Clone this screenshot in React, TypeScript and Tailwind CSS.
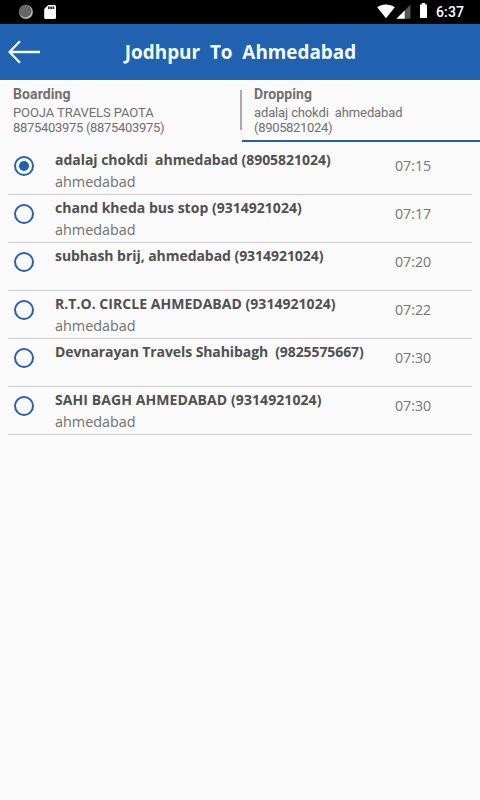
interface Stop {
  name: string;
  city: string;
  time: string;
  tracking: string;
}

const stops: Stop[] = [
  { name: 'adalaj chokdi  ahmedabad (8905821024)', city: 'ahmedabad', time: '07:15', tracking: 'tracking-[-0.035px]' },
  { name: 'chand kheda bus stop (9314921024)', city: 'ahmedabad', time: '07:17', tracking: 'tracking-[0.02px]' },
  { name: 'subhash brij, ahmedabad (9314921024)', city: '', time: '07:20', tracking: 'tracking-[-0.05px]' },
  { name: 'R.T.O. CIRCLE AHMEDABAD (9314921024)', city: 'ahmedabad', time: '07:22', tracking: 'tracking-[0.035px]' },
  { name: 'Devnarayan Travels Shahibagh  (9825575667)', city: '', time: '07:30', tracking: 'tracking-[-0.09px]' },
  { name: 'SAHI BAGH AHMEDABAD (9314921024)', city: 'ahmedabad', time: '07:30', tracking: 'tracking-[0.08px]' },
];

function StatusBar() {
  return (
    <div className="flex h-6 items-center bg-black font-['Roboto',sans-serif] text-white">
      <svg className="ml-[18px]" width="16" height="24" viewBox="0 0 16 24">
        <circle cx="8" cy="12" r="6.9" fill="#b5b5b5" />
        <circle cx="7.2" cy="11.2" r="6.2" fill="#666" />
      </svg>
      <svg className="ml-2.5" width="12" height="24" viewBox="0 0 12 24">
        <path d="M4.2 5H10.5Q12 5 12 6.5V17.5Q12 19 10.5 19H1.7Q.2 19 .2 17.5V9Z" fill="#fff" />
        <path d="M4.8 6.5V9M7.1 6.5V9M9.4 6.5V9" stroke="#222" strokeWidth="1.7" />
      </svg>
      <svg className="ml-auto" width="18" height="24" viewBox="0 0 18 24">
        <path d="M.2 7.3C5.3 3.5 12.7 3.5 17.8 7.3L9 18.3Z" fill="#fff" />
      </svg>
      <svg className="ml-px" width="15" height="24" viewBox="0 0 15 24">
        <path d="M14.5 4.6V18.8H.4Z" fill="#555" />
        <path d="M8.7 10.5V18.8H.4Z" fill="#fff" />
      </svg>
      <svg className="ml-2" width="10" height="24" viewBox="0 0 10 24">
        <path d="M2.7 3H6.3V4.4H8V18H1V4.4H2.7Z" fill="#fff" />
      </svg>
      <span className="mr-4 ml-[7px] text-sm leading-6 font-medium tracking-[0.1px]">6:37</span>
    </div>
  );
}

function Header() {
  return (
    <header className="flex h-14 items-center bg-[#2062af]">
      <svg className="ml-2" width="32" height="24" viewBox="0 0 32 24" fill="none" stroke="#f4fbff" strokeWidth="2.3">
        <path d="M32 12H1.5M12 1.2L1.5 12L12 22.8" />
      </svg>
      <h1 className="mr-[39px] flex-1 text-center text-[18.9px] font-bold whitespace-pre text-[#f4fbff]">
        Jodhpur  To  Ahmedabad
      </h1>
    </header>
  );
}

function PointTabs() {
  return (
    <div className="flex h-[62px] font-['Roboto',sans-serif] text-[#707070]">
      <div className="w-60 pt-1.5 pl-[13px]">
        <div className="text-sm leading-4 font-bold tracking-[0.1px]">Boarding</div>
        <div className="mt-[3px] text-[13px] leading-[15px] tracking-[-0.08px]">POOJA TRAVELS PAOTA</div>
        <div className="text-[13px] leading-[15px] tracking-[-0.31px]">8875403975 (8875403975)</div>
      </div>
      <div className="mt-2.5 h-10 w-0.5 bg-[#aaa]" />
      <div className="flex-1 border-b-2 border-[#2062af] pt-1.5 pl-3">
        <div className="text-sm leading-4 font-bold tracking-[0.1px]">Dropping</div>
        <div className="mt-[3px] text-[13px] leading-[15px] tracking-[-0.13px] whitespace-pre">
          adalaj chokdi  ahmedabad
        </div>
        <div className="text-[13px] leading-[15px] tracking-[-0.31px]">(8905821024)</div>
      </div>
    </div>
  );
}

function StopRow({ stop, selected }: { stop: Stop; selected: boolean }) {
  return (
    <li className="flex h-12 border-b border-[#cecece]">
      <div className="mt-[9px] ml-1.5 flex size-5 items-center justify-center rounded-full border-2 border-[#2862ad]">
        {selected && <span className="size-2.5 rounded-full bg-[#2062af]" />}
      </div>
      <div className="ml-[21px] w-[340px] whitespace-pre">
        <div className={`pt-0.5 text-sm leading-[22px] font-bold text-[#505050] ${stop.tracking}`}>{stop.name}</div>
        <div className="text-[14.4px] leading-[22px] text-[#707070]">{stop.city}</div>
      </div>
      <div className="pt-2 text-[14.2px] leading-[22px] text-[#757575]">{stop.time}</div>
    </li>
  );
}

export default function App() {
  return (
    <div className="h-screen bg-[#fafafa] font-['Open_Sans',sans-serif]">
      <StatusBar />
      <Header />
      <PointTabs />
      <ul className="mx-2 pt-[5px]">
        {stops.map((stop, i) => (
          <StopRow key={stop.name} stop={stop} selected={i === 0} />
        ))}
      </ul>
    </div>
  );
}
